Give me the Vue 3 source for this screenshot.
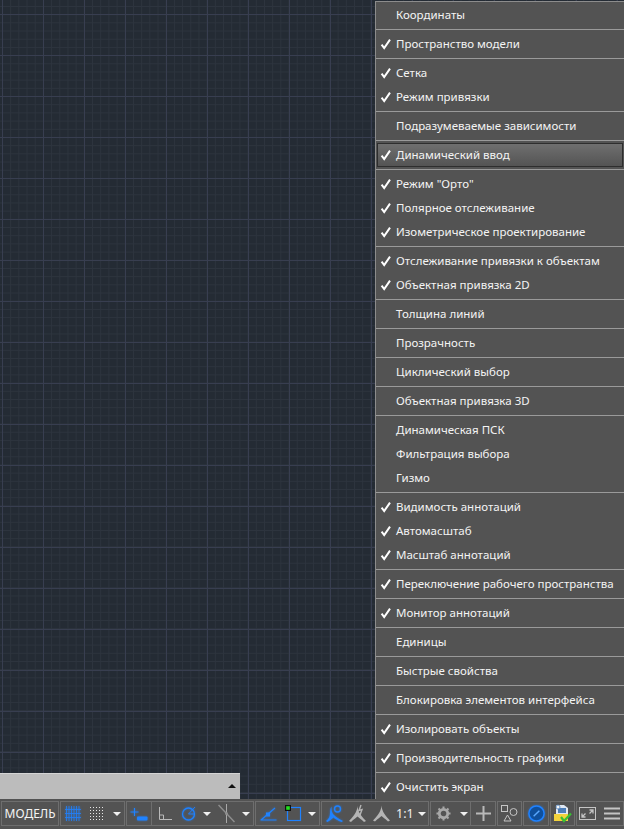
<script setup>
const sections = [
  [['Координаты', false]],
  [['Пространство модели', true]],
  [['Сетка', true], ['Режим привязки', true]],
  [['Подразумеваемые зависимости', false]],
  [['Динамический ввод', true, true]],
  [['Режим "Орто"', true], ['Полярное отслеживание', true], ['Изометрическое проектирование', true]],
  [['Отслеживание привязки к объектам', true], ['Объектная привязка 2D', true]],
  [['Толщина линий', false]],
  [['Прозрачность', false]],
  [['Циклический выбор', false]],
  [['Объектная привязка 3D', false]],
  [['Динамическая ПСК', false], ['Фильтрация выбора', false], ['Гизмо', false]],
  [['Видимость аннотаций', true], ['Автомасштаб', true], ['Масштаб аннотаций', true]],
  [['Переключение рабочего пространства', true]],
  [['Монитор аннотаций', true]],
  [['Единицы', false]],
  [['Быстрые свойства', false]],
  [['Блокировка элементов интерфейса', false]],
  [['Изолировать объекты', true]],
  [['Производительность графики', true]],
  [['Очистить экран', true]]
]
const dots = []
for (let y = 0; y < 5; y++) for (let x = 0; x < 5; x++) dots.push([1 + x * 3, 1 + y * 3])
const gridCols = [1.5, 4, 6.5, 9, 11.5, 14]
const tripod = 'M8.5 0.5C9 5 10 8 17 15.500L15 16.500C12 13.500 10 12.500 8.500 11C7 12.500 5 13.500 2 16.500L0 15.500C7 8 8 5 8.500 0.500Z'
</script>

<template>
  <div class="page">
    <div class="canvas">
      <div class="cmdline"><span class="cmd-caret"></span></div>
      <div class="menu">
        <template v-for="(section, i) in sections" :key="i">
          <div v-if="i" class="sep"></div>
          <div
            v-for="item in section"
            :key="item[0]"
            class="item"
            :class="{ active: item[2] }"
          >
            <svg v-if="item[1]" class="check" width="12" height="12" viewBox="0 0 12 12">
              <path d="M1.6 6.6 L4.2 10 L10 1.6" fill="none" stroke="#fff" stroke-width="2" />
            </svg>
            <span class="label">{{ item[0] }}</span>
          </div>
        </template>
      </div>
    </div>

    <div class="bar">
      <div class="group model">МОДЕЛЬ</div>

      <div class="group g-grid">
        <svg width="16" height="15" viewBox="0 0 16 15" class="glow">
          <g stroke="#1f82ff" stroke-width="0.800">
            <path v-for="p in gridCols" :key="p" :d="`M${p} 0V15`" />
            <path d="M0 3.500H16M0 7.500H16M0 11.500H16" />
          </g>
        </svg>
        <svg class="ml-dots" width="15" height="15" viewBox="0 0 15 15">
          <rect v-for="d in dots" :key="d.join()" :x="d[0]" :y="d[1]" width="1" height="1" fill="#e8e8e8" />
        </svg>
        <span class="caret ml-c1"></span>
      </div>

      <div class="group g-draft">
        <div class="cell c-dyn">
          <svg width="18" height="17" viewBox="0 0 18 17" class="glow">
            <path d="M4.500 3V11M0.500 7H8.500" stroke="#1f82ff" stroke-width="1.100" fill="none" />
            <rect x="7" y="11.500" width="10.500" height="4" rx="1" fill="#1f82ff" />
          </svg>
        </div>
        <div class="cell c-draft">
          <svg width="14" height="15" viewBox="0 0 14 15">
            <path d="M1.500 1V13.500H14M1.500 9H5.500V13.500" fill="none" stroke="#b9b9b9" stroke-width="1" />
          </svg>
          <svg class="ml-polar glow" width="17" height="17" viewBox="0 0 17 17">
            <circle cx="7.500" cy="9" r="6" fill="none" stroke="#1f82ff" stroke-width="1.300" />
            <path d="M7.500 9L14 2M7.500 9H14" fill="none" stroke="#1f82ff" stroke-width="0.900" />
          </svg>
          <span class="caret ml-c2"></span>
          <svg class="ml-iso" width="17" height="19" viewBox="0 0 17 19">
            <path d="M0.500 1L16.500 18" stroke="#8f8f8f" stroke-width="1.500" />
            <path d="M8.500 0V19" stroke="#a9a9a9" stroke-width="1" />
            <circle cx="8.500" cy="9.500" r="1.500" fill="#8f8f8f" />
          </svg>
          <span class="caret ml-c3"></span>
        </div>
      </div>

      <div class="group g-snap">
        <svg width="17" height="15" viewBox="0 0 17 15" class="glow">
          <path d="M0.500 14H16.500M1 14L15 2" fill="none" stroke="#1f82ff" stroke-width="1.100" />
          <rect x="6" y="6.500" width="4" height="4" fill="#1f82ff" />
        </svg>
        <svg class="ml-osnap" width="17" height="17" viewBox="0 0 17 17">
          <rect x="2.500" y="2.500" width="13" height="13" fill="none" stroke="#1f82ff" stroke-width="1.200" />
          <rect x="0" y="0" width="6" height="6" fill="#111" />
          <rect x="1.200" y="1.200" width="3.600" height="3.600" fill="#22e01f" />
        </svg>
        <span class="caret ml-c4"></span>
      </div>

      <div class="group g-anno">
        <svg width="17" height="19" viewBox="0 0 17 19" class="glow">
          <path d="M5.500 2.500C5.500 7 6 9 8 11C10 13 13 15 17 17L15.500 18C12 16.500 9 15 7.500 13.500C6 15 4 16.500 1.500 18L0 17C3 15 4 12 4 9C4 6 4.500 4 5.500 2.500Z" fill="#1f82ff" />
          <circle cx="11.500" cy="5" r="3" fill="none" stroke="#1f82ff" stroke-width="1.400" />
        </svg>
        <svg class="ml-a2" width="17" height="19" viewBox="0 0 17 19">
          <path transform="translate(0 1.500)" :d="tripod" fill="#b4b4b4" />
          <path d="M12 1L10 6.500L13 5.500L11 11" fill="none" stroke="#b4b4b4" stroke-width="1.400" />
        </svg>
        <svg class="ml-a3" width="17" height="17" viewBox="0 0 17 17">
          <path :d="tripod" fill="#b4b4b4" />
        </svg>
        <span class="scale">1:1</span>
        <span class="caret ml-c5"></span>
      </div>

      <div class="group g-gear">
        <div class="cell c-gear">
          <svg width="15" height="15" viewBox="0 0 16 16">
            <circle cx="8" cy="8" r="4.500" fill="none" stroke="#a8a8a8" stroke-width="3" />
            <path d="M8 0.500V3M8 13V15.500M0.500 8H3M13 8H15.500M2.700 2.700L4.500 4.500M11.500 11.500L13.300 13.300M13.300 2.700L11.500 4.500M4.500 11.500L2.700 13.300" stroke="#a8a8a8" stroke-width="2.200" />
          </svg>
          <span class="caret ml-c6"></span>
        </div>
        <div class="cell c-plus">
          <svg width="15" height="15" viewBox="0 0 15 15">
            <path d="M7.500 0V15M0 7.500H15" stroke="#b9b9b9" stroke-width="2" />
          </svg>
        </div>
      </div>

      <div class="group g-shapes">
        <svg width="17" height="17" viewBox="0 0 17 17">
          <rect x="0.500" y="0.500" width="6" height="6" fill="none" stroke="#c4c4c4" />
          <circle cx="12.500" cy="7" r="3.500" fill="none" stroke="#c4c4c4" />
          <path d="M6.500 10L10 16H3Z" fill="none" stroke="#c4c4c4" />
        </svg>
      </div>

      <div class="group g-perf">
        <svg width="19" height="19" viewBox="0 0 20 20" class="glow">
          <circle cx="10" cy="10" r="8" fill="#0f4f9c" stroke="#1f82ff" stroke-width="1.600" />
          <path d="M7 13L13 7" stroke="#5aa8ff" stroke-width="1.500" />
        </svg>
      </div>

      <div class="group g-tray">
        <svg width="19" height="19" viewBox="0 0 19 19">
          <path d="M3 1H11L15 4V10H3Z" fill="#dfe7f2" />
          <rect x="5" y="4" width="8" height="5" fill="#4c7db8" />
          <circle cx="5" cy="3" r="2" fill="#f5f5f5" stroke="#4c7db8" stroke-width="0.800" />
          <rect x="1" y="10" width="14" height="7" fill="#f2d23c" />
          <path d="M8 13L11 17L18 9.500" fill="none" stroke="#37c032" stroke-width="2.200" />
        </svg>
      </div>

      <div class="group g-last">
        <svg width="17" height="13" viewBox="0 0 17 13">
          <rect x="0.500" y="0.500" width="16" height="12" fill="none" stroke="#c4c4c4" />
          <path d="M3 10L6.500 6.500M3 6.500V10H6.500" fill="none" stroke="#c4c4c4" stroke-width="1.300" />
          <path d="M14 3L10.500 6.500M10.500 3H14V6.500" fill="none" stroke="#c4c4c4" stroke-width="1.300" />
        </svg>
        <svg class="ml-ham" width="16" height="13" viewBox="0 0 16 13">
          <path d="M0 1.500H16M0 6.500H16M0 11.500H16" stroke="#c4c4c4" stroke-width="2" />
        </svg>
      </div>
    </div>
  </div>
</template>

<style scoped>
.page {
  width: 624px;
  height: 829px;
  overflow: hidden;
  display: flex;
  flex-direction: column;
  font-family: "Noto Sans", sans-serif;
  color: #fff;
}
.canvas {
  position: relative;
  flex: 1;
  background-color: #242b34;
  background-image:
    linear-gradient(to right, #383e50 1px, transparent 1px),
    linear-gradient(to bottom, #383e50 1px, transparent 1px),
    linear-gradient(to right, #2d343e 1px, transparent 1px),
    linear-gradient(to bottom, #2d343e 1px, transparent 1px);
  background-size: 41px 41px, 41px 41px, 8.2px 8.2px, 8.2px 8.2px;
  background-position: 2px 14px, 2px 14px, 2px 6px, 2px 6px;
}
.cmdline {
  position: absolute;
  left: 0;
  bottom: 0;
  width: 240px;
  height: 26px;
  background: #bcbcbc;
  border-top: 1px solid #d4d4d4;
  box-sizing: border-box;
}
.cmd-caret {
  position: absolute;
  right: 4px;
  top: 10px;
  border-left: 4px solid transparent;
  border-right: 4px solid transparent;
  border-bottom: 4px solid #111;
}
.menu {
  position: absolute;
  left: 375px;
  top: 1px;
  right: 0;
  bottom: 0;
  box-sizing: border-box;
  padding-top: 1px;
  background: #535353;
  border-top: 1px solid #8c8c8c;
  border-left: 1px solid #8c8c8c;
}
.item {
  position: relative;
  height: 24px;
  box-sizing: border-box;
  display: flex;
  align-items: center;
  padding-left: 20px;
  padding-bottom: 2px;
  font-size: 11.5px;
  white-space: nowrap;
  color: #f4f4f4;
}
.item.active {
  margin: 0 1px;
  padding-left: 18px;
  background: linear-gradient(to bottom, #6f6f6f, #545454);
  border: 1px solid #2e2e2e;
}
.check {
  position: absolute;
  left: 4px;
  top: 6px;
}
.item.active .check {
  left: 2px;
  top: 5px;
}
.sep {
  height: 5px;
  background: linear-gradient(#9a9a9a, #9a9a9a) 0 2px / 100% 1px no-repeat;
}
.bar {
  height: 30px;
  flex: none;
  background: #535353;
  box-sizing: border-box;
  padding: 2px 1px 3px 1px;
  display: flex;
  gap: 1px;
}
.group {
  box-sizing: border-box;
  height: 25px;
  border: 1px solid #6e6e6e;
  display: flex;
  align-items: center;
  flex: none;
}
.model {
  width: 58px;
  justify-content: center;
  font-size: 12px;
  color: #f4f4f4;
}
.g-grid { width: 65px; padding-left: 4px; }
.ml-dots { margin-left: 8px; }
.ml-c1 { margin-left: 9px; }
.g-draft { width: 128px; }
.cell { height: 100%; display: flex; align-items: center; box-sizing: border-box; }
.c-dyn { width: 25px; padding-left: 3px; border-right: 1px solid #6e6e6e; }
.c-draft { padding-left: 6px; }
.ml-polar { margin-left: 9px; }
.ml-c2 { margin-left: 5px; }
.ml-iso { margin-left: 7px; }
.ml-c3 { margin-left: 7px; }
.g-snap { width: 65px; padding-left: 4px; }
.ml-osnap { margin-left: 8px; }
.ml-c4 { margin-left: 6px; }
.g-anno { width: 108px; padding-left: 4px; }
.ml-a2 { margin-left: 6px; }
.ml-a3 { margin-left: 7px; }
.scale { margin-left: 6px; font-size: 12.500px; color: #f0f0f0; }
.ml-c5 { margin-left: 4px; }
.g-gear { width: 66px; }
.c-gear { width: 40px; padding-left: 5px; border-right: 1px solid #6e6e6e; }
.ml-c6 { margin-left: 9px; }
.c-plus { padding-left: 5px; }
.g-shapes { width: 25px; padding-left: 3px; }
.g-perf { width: 26px; padding-left: 3px; }
.g-tray { width: 25px; padding-left: 2px; }
.g-last { width: 48px; padding-left: 2px; }
.ml-ham { margin-left: 8px; }
.caret {
  flex: none;
  width: 0;
  height: 0;
  border-left: 4px solid transparent;
  border-right: 4px solid transparent;
  border-top: 4px solid #f0f0f0;
}
.glow { filter: drop-shadow(0 0 1px rgba(31, 130, 255, 0.6)); }
</style>
